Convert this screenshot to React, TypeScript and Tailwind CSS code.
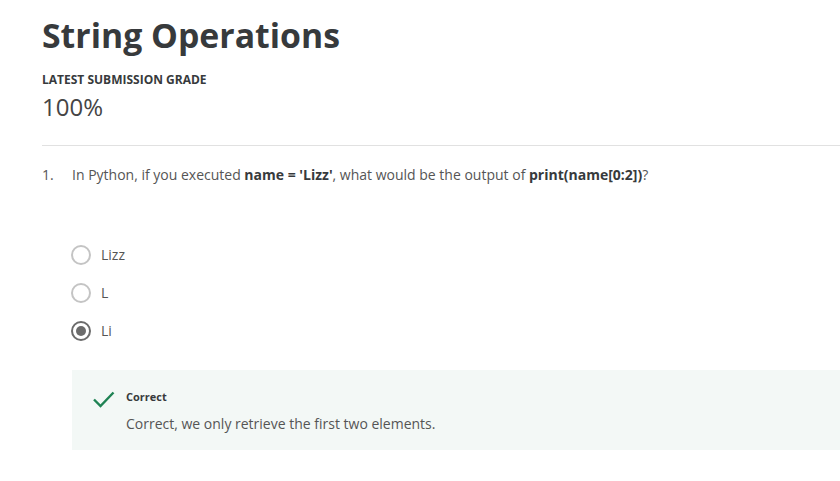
const options = [
  { label: "Lizz", checked: false },
  { label: "L", checked: false },
  { label: "Li", checked: true },
]

function Radio({ checked }: { checked: boolean }) {
  if (checked) {
    return (
      <span className="flex h-[20px] w-[20px] items-center justify-center rounded-full border-[2.5px] border-[#6b6b6b]">
        <span className="h-[10px] w-[10px] rounded-full bg-[#6b6b6b]" />
      </span>
    )
  }
  return <span className="h-[20px] w-[20px] rounded-full border-2 border-[#c4c4c4]" />
}

export default function App() {
  return (
    <div className="min-h-[481px] w-[840px] overflow-hidden bg-white pl-[42px] font-['Open_Sans',sans-serif] text-[#373a3c]">
      <h1 className="pt-[12px] text-[33.8px] font-bold leading-[46px] text-[#373a3c]">
        String Operations
      </h1>
      <div className="mt-[15px] text-[12px] font-bold leading-[14px] text-[#373a3c]">
        LATEST SUBMISSION GRADE
      </div>
      <div className="mt-[4px] text-[24px] leading-[32px] text-[#454545]">100%</div>

      <div className="mt-[22px] h-px bg-[#e1e1e1]" />

      <div className="mt-[19px] flex text-[14px] leading-[20px] text-[#555]">
        <span className="w-[30px]">1.</span>
        <p>
          In Python, if you executed <b className="text-[#373a3c]">name = 'Lizz'</b>, what would be the output of{" "}
          <b className="text-[#373a3c]">print(name[0:2])</b>?
        </p>
      </div>

      <div className="mt-[60px] flex flex-col gap-[18px] pl-[29px]">
        {options.map((o) => (
          <label key={o.label} className="flex items-center gap-[10px] text-[14px] leading-[20px] text-[#555]">
            <Radio checked={o.checked} />
            <span>{o.label}</span>
          </label>
        ))}
      </div>

      <div className="ml-[30px] mt-[29px] flex h-[80px] gap-[10px] bg-[#f3f8f6] pl-[20px] pt-[17px]">
        <svg width="24" height="24" viewBox="0 0 24 24" className="mt-[1px]">
          <path d="M2 11.5 L8.5 18 L21.5 4.5" fill="none" stroke="#1f8354" strokeWidth="2.4" />
        </svg>
        <div>
          <div className="text-[11px] font-bold leading-[20px] text-[#373a3c]">Correct</div>
          <div className="mt-[7px] text-[14px] leading-[20px] text-[#555]">
            Correct, we only retrieve the first two elements.
          </div>
        </div>
      </div>
    </div>
  )
}
